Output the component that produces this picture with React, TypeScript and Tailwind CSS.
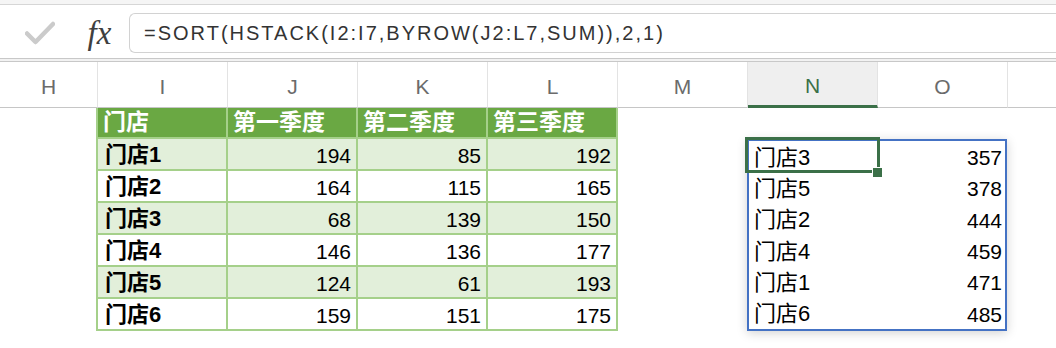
const columns = ['I', 'J', 'K', 'L', 'M', 'N', 'O'];

const stores = [
  { name: '门店1', q: [194, 85, 192] },
  { name: '门店2', q: [164, 115, 165] },
  { name: '门店3', q: [68, 139, 150] },
  { name: '门店4', q: [146, 136, 177] },
  { name: '门店5', q: [124, 61, 193] },
  { name: '门店6', q: [159, 151, 175] },
];

const sorted = [
  ['门店3', 357],
  ['门店5', 378],
  ['门店2', 444],
  ['门店4', 459],
  ['门店1', 471],
  ['门店6', 485],
];

const App = () => {
  return (
    <div className="w-[1056px] h-[348px] overflow-hidden bg-white font-['Liberation_Sans','Noto_Sans_CJK_SC',sans-serif] text-black">
      {/* Formula bar */}
      <div className="h-[5px] bg-[#f5f5f5] border-b border-[#d6d6d6]" />
      <div className="h-[54px] flex items-start pt-[8px] border-b border-[#c8c8c8]">
        <div className="w-[76px] h-[40px] flex items-center justify-center pl-[4px]">
          <svg width="30" height="24" viewBox="0 0 30 24" fill="none">
            <path d="M2 12.5 L10.5 21 L28 3" stroke="#cbcbcb" strokeWidth="4.5" strokeLinecap="round" strokeLinejoin="round" />
          </svg>
        </div>
        <div className="w-[53px] h-[40px] flex items-center justify-center pr-[6px]">
          <span className="font-['Liberation_Serif',serif] italic text-[33px] leading-none text-[#3f3f3f]">fx</span>
        </div>
        <div className="flex-1 h-[40px] flex items-center pl-[14px] border border-r-0 border-[#d2d2d2] rounded-l-[6px] text-[20px] tracking-[2px] text-[#333]">
          =SORT(HSTACK(I2:I7,BYROW(J2:L7,SUM)),2,1)
        </div>
      </div>
      <div className="h-[2px] bg-[#f2f2f2]" />

      {/* Column headers */}
      <div className="h-[47px] flex border-t border-[#c8c8c8] text-[21px] text-[#6b6b6b]">
        <div className="w-[98px] h-full flex items-center justify-center pt-[4px] border-r border-r-[#e3e3e3] border-b border-b-[#c6c6c6]">
          H
        </div>
        {columns.map((c) =>
          c === 'N' ? (
            <div
              key={c}
              className="w-[130px] h-full flex items-center justify-center pt-[4px] bg-[#efefef] text-[#3b7048] border-r border-r-[#e3e3e3] border-b-[3px] border-b-[#3b7048]"
            >
              {c}
            </div>
          ) : (
            <div
              key={c}
              className="w-[130px] h-full flex items-center justify-center pt-[4px] border-r border-r-[#e3e3e3] border-b border-b-[#c6c6c6]"
            >
              {c}
            </div>
          )
        )}
        <div className="flex-1 h-full border-b border-[#c6c6c6]" />
      </div>

      {/* Sheet body */}
      <div className="flex items-start text-[21px] leading-none">
        <div className="ml-[96px] grid grid-cols-[128px_128px_128px_128px] gap-[2px] px-[2px] pb-[2px] bg-[#a5d08a]">
          {['门店', '第一季度', '第二季度', '第三季度'].map((h) => (
            <div key={h} className="h-[29px] flex items-center pl-[5px] bg-[#6aa843] text-white font-bold text-[23px]">
              {h}
            </div>
          ))}
          {stores.map((s, i) => {
            const bg = i % 2 === 0 ? 'bg-[#e2efda]' : 'bg-white';
            return [
              <div key={s.name} className={`h-[30px] flex items-center pl-[7px] pt-[2px] font-bold text-[22px] ${bg}`}>
                {s.name}
              </div>,
              ...s.q.map((v, j) => (
                <div key={s.name + j} className={`h-[30px] flex items-center justify-end pr-[5px] pt-[2px] ${bg}`}>
                  {v}
                </div>
              )),
            ];
          })}
        </div>

        <div className="relative ml-[129px] mt-[31px] w-[260px] h-[192px] border-2 border-[#4472c4] bg-white shadow-[0_2px_10px_rgba(0,0,0,0.18)] grid grid-rows-6">
          {sorted.map(([name, total]) => (
            <div key={name} className="flex items-center justify-between pl-[5px] pr-[3px] pt-[2px]">
              <span className="text-[22px]">{name}</span>
              <span>{total}</span>
            </div>
          ))}
          <div className="absolute -left-[4px] -top-[4px] w-[135px] h-[36px] border-[3px] border-[#3b7048]" />
          <div className="absolute left-[123px] top-[26px] w-[11px] h-[11px] bg-[#3b7048] border border-white" />
        </div>
      </div>
    </div>
  );
};

export default App;
